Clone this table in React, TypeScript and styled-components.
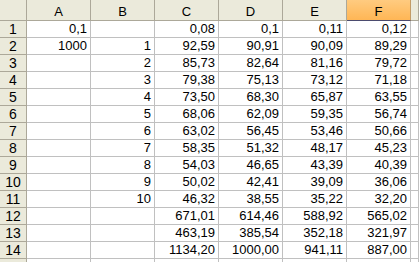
import styled, { createGlobalStyle } from 'styled-components'

const GlobalStyle = createGlobalStyle`
	html, body {
		margin: 0;
		padding: 0;
		background: #ffffff;
		overflow: hidden;
	}
`

const columns = ['A', 'B', 'C', 'D', 'E', 'F', '']

const rows: string[][] = [
	['0,1', '', '0,08', '0,1', '0,11', '0,12'],
	['1000', '1', '92,59', '90,91', '90,09', '89,29'],
	['', '2', '85,73', '82,64', '81,16', '79,72'],
	['', '3', '79,38', '75,13', '73,12', '71,18'],
	['', '4', '73,50', '68,30', '65,87', '63,55'],
	['', '5', '68,06', '62,09', '59,35', '56,74'],
	['', '6', '63,02', '56,45', '53,46', '50,66'],
	['', '7', '58,35', '51,32', '48,17', '45,23'],
	['', '8', '54,03', '46,65', '43,39', '40,39'],
	['', '9', '50,02', '42,41', '39,09', '36,06'],
	['', '10', '46,32', '38,55', '35,22', '32,20'],
	['', '', '671,01', '614,46', '588,92', '565,02'],
	['', '', '463,19', '385,54', '352,18', '321,97'],
	['', '', '1134,20', '1000,00', '941,11', '887,00'],
	['', '', '', '', '', ''],
]

export default function App() {
	return (
		<>
			<GlobalStyle />
			<Sheet>
				<Corner />
				{columns.map((c, i) => (
					<ColHeader key={c + i} $selected={c === 'F'}>
						{c}
					</ColHeader>
				))}
				{rows.map((row, r) => (
					<Row key={r}>
						<RowHeader>{r < 14 ? r + 1 : ''}</RowHeader>
						{row.map((v, i) => (
							<Cell key={i}>{v}</Cell>
						))}
						<Cell />
					</Row>
				))}
			</Sheet>
		</>
	)
}

const Sheet = styled.div`
	display: grid;
	grid-template-columns: 27px repeat(6, 64px) 1fr;
	grid-template-rows: 21px repeat(15, 17px);
	width: 419px;
	height: 262px;
	overflow: hidden;
	font-family: 'Liberation Sans', Arial, sans-serif;
	font-size: 13px;
	color: #000;
`
const Row = styled.div`
	display: contents;
`
const Corner = styled.div`
	background: #ebeadb;
	border-right: 1px solid #aca899;
	border-bottom: 1px solid #aca899;
	box-sizing: border-box;
`
const ColHeader = styled.div<{ $selected?: boolean }>`
	display: flex;
	align-items: center;
	justify-content: center;
	padding-top: 2px;
	box-sizing: border-box;
	background: ${p => (p.$selected ? 'linear-gradient(#ffcb80, #ffb655)' : '#ebeadb')};
	border-right: 1px solid ${p => (p.$selected ? '#c29b67' : '#aca899')};
	border-bottom: 1px solid ${p => (p.$selected ? '#4b4b6f' : '#aca899')};
`
const RowHeader = styled.div`
	display: flex;
	align-items: center;
	justify-content: center;
	box-sizing: border-box;
	background: #ebeadb;
	border-right: 1px solid #aca899;
	border-bottom: 1px solid #aca899;
	font-size: 14px;
	line-height: 16px;
`
const Cell = styled.div`
	box-sizing: border-box;
	border-right: 1px solid #c0c0c0;
	border-bottom: 1px solid #c0c0c0;
	text-align: right;
	padding: 0 3px 0 2px;
	line-height: 16px;
	white-space: nowrap;
	overflow: hidden;
`
